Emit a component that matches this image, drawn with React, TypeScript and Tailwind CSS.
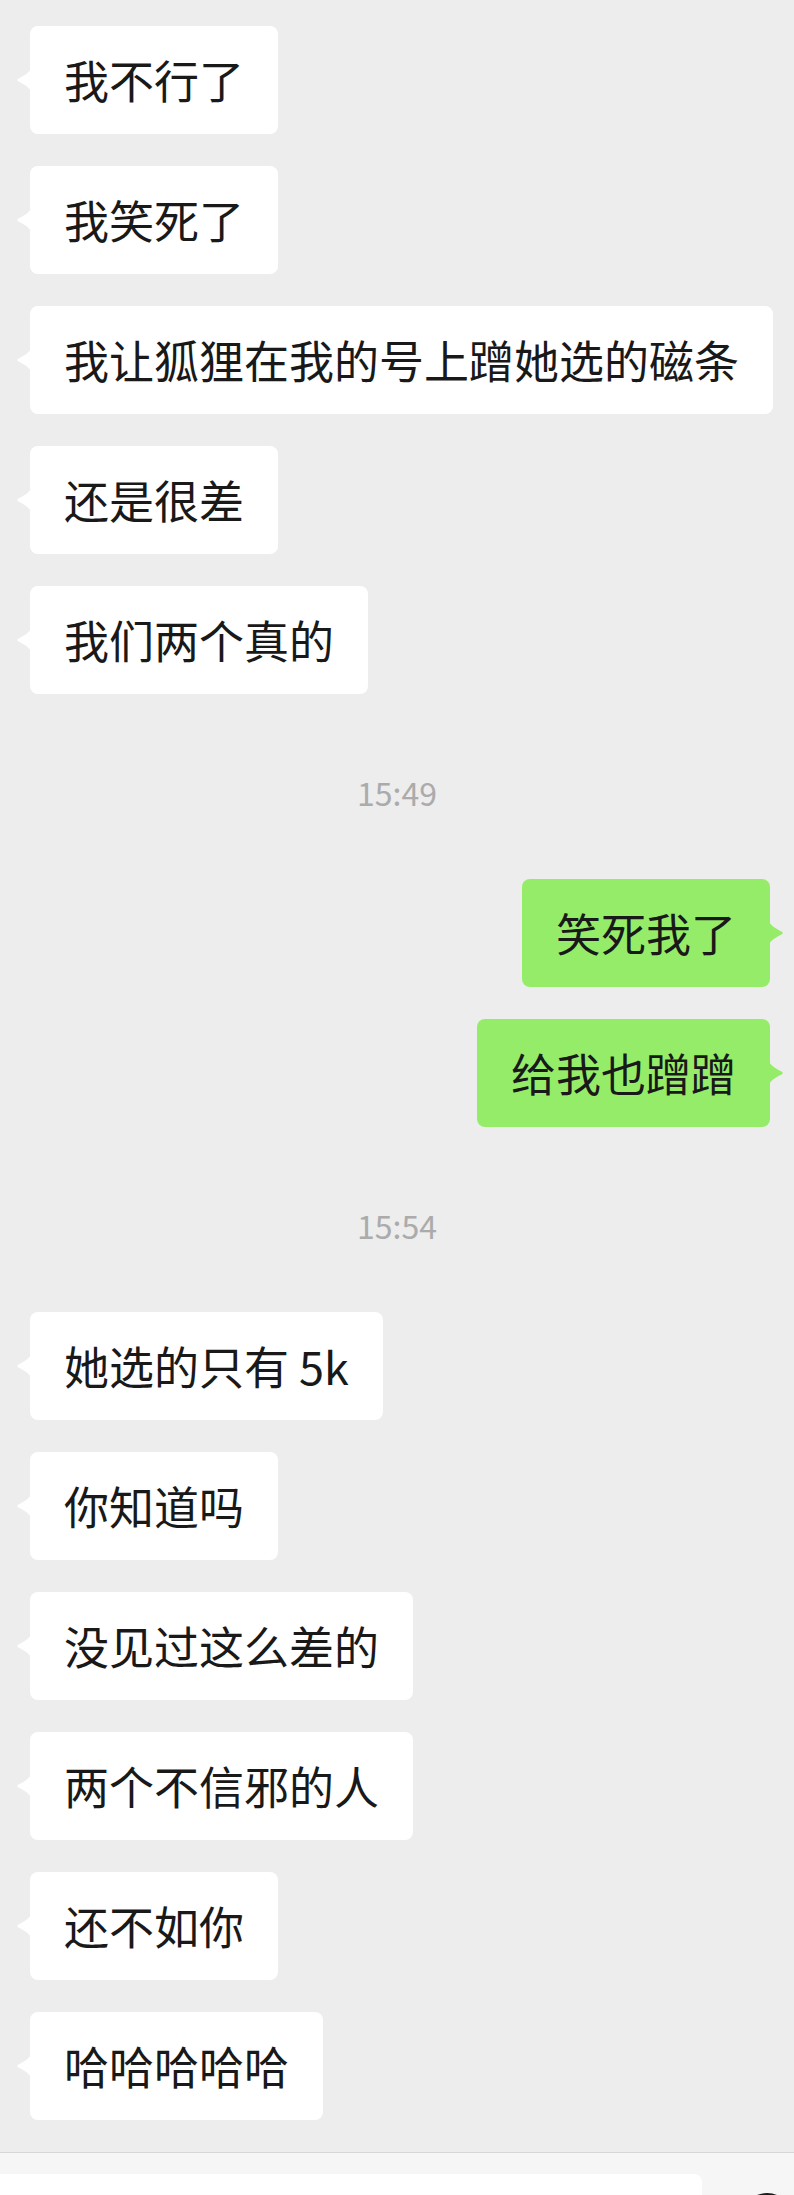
import React from 'react';

type Item =
  | { kind: 'in'; text: string }
  | { kind: 'out'; text: string }
  | { kind: 'time'; text: string };

const items: Item[] = [
  { kind: 'in', text: '我不行了' },
  { kind: 'in', text: '我笑死了' },
  { kind: 'in', text: '我让狐狸在我的号上蹭她选的磁条' },
  { kind: 'in', text: '还是很差' },
  { kind: 'in', text: '我们两个真的' },
  { kind: 'time', text: '15:49' },
  { kind: 'out', text: '笑死我了' },
  { kind: 'out', text: '给我也蹭蹭' },
  { kind: 'time', text: '15:54' },
  { kind: 'in', text: '她选的只有 5k' },
  { kind: 'in', text: '你知道吗' },
  { kind: 'in', text: '没见过这么差的' },
  { kind: 'in', text: '两个不信邪的人' },
  { kind: 'in', text: '还不如你' },
  { kind: 'in', text: '哈哈哈哈哈' },
];

const cjk = "font-['Noto_Sans_CJK_SC','Noto_Sans',sans-serif]";

function Tail({ side, color }: { side: 'left' | 'right'; color: string }) {
  // little pointer beside the bubble
  const pos = side === 'left' ? 'left-[-14px]' : 'right-[-14px] scale-x-[-1]';
  return (
    <svg
      className={`absolute top-[calc(50%-13px)] ${pos}`}
      width="16"
      height="26"
      viewBox="0 0 16 26"
    >
      <path d="M16 0 C14 5 8 9 2.5 11.5 Q0 13 2.5 14.5 C8 17 14 21 16 26 Z" fill={color} />
    </svg>
  );
}

function Bubble({ text, mine }: { text: string; mine: boolean }) {
  const bg = mine ? 'bg-[#95ec69]' : 'bg-white';
  return (
    <div className={`flex ${mine ? 'justify-end pr-[24px]' : 'justify-start pl-[30px]'}`}>
      <div
        className={`relative ${bg} rounded-[8px] px-[34px] py-[22px] text-[45px] leading-[64px] text-[#191919] whitespace-nowrap ${cjk}`}
      >
        <Tail side={mine ? 'right' : 'left'} color={mine ? '#95ec69' : '#ffffff'} />
        {text}
      </div>
    </div>
  );
}

export default function App() {
  return (
    <div className="w-[794px] h-[2195px] overflow-hidden bg-[#ededed] flex flex-col">
      <div className="flex flex-col gap-[32px] pt-[26px]">
        {items.map((item, i) =>
          item.kind === 'time' ? (
            <div
              key={i}
              className={`h-[121px] pt-[46px] text-center text-[32px] leading-[40px] text-[#ababab] ${cjk}`}
            >
              {item.text}
            </div>
          ) : (
            <Bubble key={i} text={item.text} mine={item.kind === 'out'} />
          )
        )}
      </div>

      {/* input bar */}
      <div className="mt-[32px] flex-1 border-t border-[#d6d6d6] bg-[#f6f6f6] pt-[21px] flex items-start">
        <div className="w-[702px] h-[80px] bg-white rounded-tr-[8px]" />
        <div className="ml-[40px] mt-[19px] w-[50px] h-[50px] shrink-0 rounded-full border-[3px] border-[#1a1a1a]" />
      </div>
    </div>
  );
}
